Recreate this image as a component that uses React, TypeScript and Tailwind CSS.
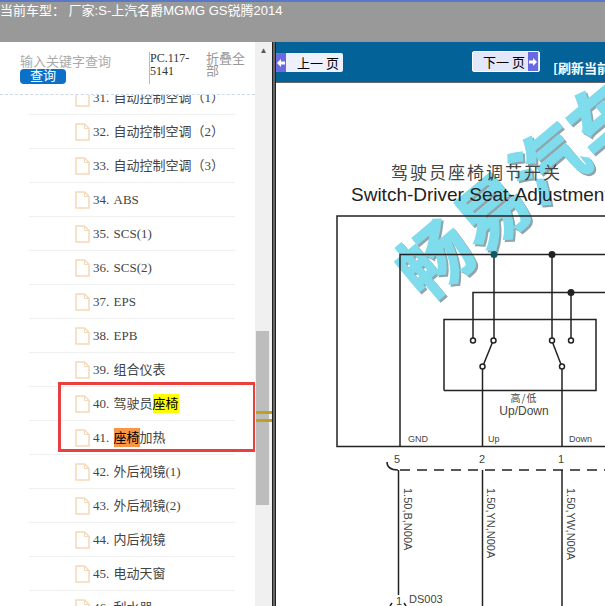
const items = [
  { n: "31.", t: "自动控制空调（1）" },
  { n: "32.", t: "自动控制空调（2）" },
  { n: "33.", t: "自动控制空调（3）" },
  { n: "34.", t: "ABS" },
  { n: "35.", t: "SCS(1)" },
  { n: "36.", t: "SCS(2)" },
  { n: "37.", t: "EPS" },
  { n: "38.", t: "EPB" },
  { n: "39.", t: "组合仪表" },
  { n: "40.", t: "驾驶员", hl: "座椅", color: "bg-[#ffff00]" },
  { n: "41.", hl: "座椅", color: "bg-[#f79646]", after: "加热" },
  { n: "42.", t: "外后视镜(1)" },
  { n: "43.", t: "外后视镜(2)" },
  { n: "44.", t: "内后视镜" },
  { n: "45.", t: "电动天窗" },
  { n: "46.", t: "刮水器" },
];

function FileIcon() {
  return (
    <svg width="16" height="18" viewBox="0 0 16 18" className="shrink-0">
      <path d="M1 1h8.500l4.500 4.500v11.500h-13z" fill="#fff" stroke="#f5d9b8" strokeWidth="1.500" />
      <path d="M9.500 1v4.500h4.500" fill="none" stroke="#f5d9b8" />
    </svg>
  );
}

function Arrow({ right }: { right?: boolean }) {
  return (
    <svg width="8" height="8" viewBox="0 0 8 8">
      <path d={right ? "M0 2.500h4V0l4 4-4 4V5.500H0z" : "M8 2.500H4V0L0 4l4 4V5.500h4z"} fill="#fff" />
    </svg>
  );
}

function Diagram() {
  return (
    <svg width="329" height="523" viewBox="276 83 329 523" className="block">
      <g fontSize="72" fontWeight="700" letterSpacing="2" strokeWidth="1.500" fontFamily="'Noto Sans CJK SC', sans-serif">
        <text transform="translate(427 305) rotate(-40)" fill="#8fa5ab" stroke="#8fa5ab">畅易汽车</text>
        <text transform="translate(425 303) rotate(-40)" fill="#7fdcec" stroke="#7fdcec">畅易汽车</text>
      </g>

      <text x="391" y="179" fontSize="17" letterSpacing="2" fill="#444" fontFamily="'Noto Sans CJK SC', sans-serif">驾驶员座椅调节开关</text>
      <text x="351" y="201" fontSize="19" fill="#222" fontFamily="'Liberation Sans', sans-serif">Switch-Driver Seat-Adjustment</text>

      <g fill="none" stroke="#222" strokeWidth="1.500">
        <path d="M605 216H337V446.500H605" />
        <path d="M605 254.500H400V446" />
        <path d="M605 292.500H473V340" />
        <path d="M494 254V340" />
        <path d="M552 254V340" />
        <path d="M571 292V340" />
        <path d="M444 390.500V319.500H596V390.500H444" />
        <path d="M482.500 367V446" />
        <path d="M562 367V446" />
        <path d="M482.500 367L493 341" />
        <path d="M562 367L552 341" />
        <path d="M398.500 470V595" />
        <path d="M482.500 470V606" />
        <path d="M562 470V606" />
        <path d="M387 462c0 5 4 8 11 8" />
        <path d="M400 470H605" strokeDasharray="10 7" />
        <path d="M390 606l2-3M406 606l-2-3" />
      </g>

      <g fill="#222">
        <circle cx="494" cy="254.500" r="3.500" fill="#0e5a6a" />
        <circle cx="552" cy="254.500" r="3.500" />
        <circle cx="571" cy="292.500" r="3.500" />
      </g>
      <g fill="#fff" stroke="#222" strokeWidth="1.500">
        <circle cx="473" cy="340.500" r="2.500" />
        <circle cx="493.500" cy="340.500" r="2.500" />
        <circle cx="552" cy="340.500" r="2.500" />
        <circle cx="571" cy="340.500" r="2.500" />
        <circle cx="482.500" cy="366.500" r="2.500" />
        <circle cx="562" cy="366.500" r="2.500" />
      </g>

      <g fill="#444" fontFamily="'Liberation Sans', sans-serif">
        <text x="524" y="402" fontSize="10" letterSpacing="1" textAnchor="middle" fontFamily="'Noto Sans CJK SC', sans-serif">高/低</text>
        <text x="524" y="415" fontSize="12" textAnchor="middle">Up/Down</text>
        <text x="408" y="442" fontSize="9">GND</text>
        <text x="488" y="442" fontSize="9">Up</text>
        <text x="569" y="442" fontSize="9">Down</text>
        <text x="394" y="463" fontSize="11">5</text>
        <text x="479" y="463" fontSize="11">2</text>
        <text x="558" y="463" fontSize="11">1</text>
        <text transform="translate(404 488) rotate(90)" fontSize="11">1.50,B,N00A</text>
        <text transform="translate(487 488) rotate(90)" fontSize="11">1.50,YN,N00A</text>
        <text transform="translate(567 488) rotate(90)" fontSize="11">1.50,YW,N00A</text>
        <text x="396" y="605" fontSize="11">1</text>
        <text x="409" y="603" fontSize="11">DS003</text>
      </g>
    </svg>
  );
}

export default function App() {
  return (
    <div className="w-[605px] h-[606px] overflow-hidden flex flex-col bg-white font-['Liberation_Serif','Noto_Sans_CJK_SC',serif]">
      <div className="h-[42px] shrink-0 bg-[#999999] border-t-2 border-[#5a78c8] text-white text-[13px] leading-[18px] font-['Liberation_Sans','Noto_Sans_CJK_SC',sans-serif] whitespace-nowrap">
        当前车型：&nbsp;厂家:S-上汽名爵MGMG GS锐腾2014
      </div>

      <div className="flex flex-1 min-h-0">
        <div className="w-[255px] shrink-0 flex flex-col overflow-hidden relative">
          <div className="h-[53px] shrink-0 flex border-b border-dashed border-[#cfd8e8] relative z-10 bg-white">
            <div className="w-[149px] pl-5 pt-[13px] text-[13px] leading-[14px] text-[#aaaaaa]">
              <div>输入关键字查询</div>
              <div className="w-[46px] h-[15px] bg-[#0a70c8] rounded-[4px] text-white text-center">查询</div>
            </div>
            <div className="w-[57px] border-l border-[#bbbbbb] h-[32px] mt-[10px] text-xs leading-[13px] text-[#333333]">
              PC.117-<br />5141
            </div>
            <div className="w-[40px] pt-[11px] text-[13px] leading-[12px] text-[#999999]">折叠全部</div>
          </div>

          <div className="flex flex-col -mt-[14px]">
            {items.map((it) => (
              <div key={it.n} className="h-[34px] shrink-0 ml-[29px] mr-[20px] border-b border-[#f0f0f0] flex items-center text-[13px] text-[#444444] whitespace-nowrap">
                <div className="ml-[46px] mr-[2px] flex">
                  <FileIcon />
                </div>
                <span className="mr-[1px]">{it.n}&nbsp;</span>
                {it.t && <span>{it.t}</span>}
                {it.hl && <span className={`${it.color} text-black`}>{it.hl}</span>}
                {it.after && <span>{it.after}</span>}
              </div>
            ))}
          </div>

          <div className="absolute left-[58px] top-[340px] w-[198px] h-[70px] border-[3px] border-[#e84040]" />
        </div>

        <div className="w-[17px] shrink-0 bg-[#f0f0f0] flex flex-col relative">
          <div className="h-[17px] flex items-center justify-center text-[8px] text-[#555555]">▲</div>
          <div className="absolute left-[1px] top-[289px] w-[13px] h-[174px] bg-[#bdbdbd]" />
          <div className="absolute left-[1px] top-[369px] w-[16px] h-[3px] bg-[#c0a020]" />
          <div className="absolute left-[1px] top-[377px] w-[16px] h-[3px] bg-[#c0a020]" />
        </div>

        <div className="w-[4px] shrink-0 bg-[#666666] border-x border-[#222222]" />

        <div className="flex-1 min-w-0 flex flex-col">
          <div className="h-[41px] shrink-0 bg-[#036298] relative whitespace-nowrap border-b border-[#666666]">
            <div className="absolute left-0 top-[11px] w-[67px] h-[19px] rounded-[2px] bg-[#eef0fb] flex items-center text-[13px] text-black font-['Noto_Sans_CJK_SC',sans-serif]">
              <span className="w-[10px] h-full bg-[#6a6ae0] rounded-l-[2px] flex items-center justify-center">
                <Arrow />
              </span>
              <span className="ml-[11px]">上一 页</span>
            </div>
            <div className="absolute left-[196px] top-[9px] w-[68px] h-[21px] rounded-[2px] border border-white bg-[#e4e6fa] flex items-center text-[13px] text-black font-['Noto_Sans_CJK_SC',sans-serif]">
              <span className="ml-[10px]">下一 页</span>
              <span className="absolute right-[1px] top-0 w-[10px] h-full bg-[#6a6ae0] flex items-center justify-center">
                <Arrow right />
              </span>
            </div>
            <div className="absolute left-[277px] top-[16px] text-[13px] font-bold text-white font-['Noto_Sans_CJK_SC',sans-serif]">[刷新当前</div>
          </div>
          <div className="flex-1 min-h-0 overflow-hidden">
            <Diagram />
          </div>
        </div>
      </div>
    </div>
  );
}
